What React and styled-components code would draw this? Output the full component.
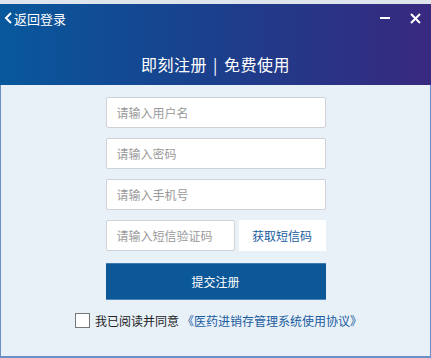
import styled, { createGlobalStyle } from "styled-components";

const GlobalStyle = createGlobalStyle`
  html, body {
    margin: 0;
    padding: 0;
    background: #dfe5ec;
  }
  body {
    font-family: "Noto Sans CJK SC", "Liberation Sans", sans-serif;
  }
`;

const Window = styled.div`
  width: 431px;
  height: 358px;
  padding-top: 4px;
  box-sizing: border-box;
  display: flex;
  flex-direction: column;
  background: #dfe5ec;
`;

const Header = styled.div`
  height: 81px;
  background: linear-gradient(90deg, #08589c 0%, #1b3f8c 50%, #38297f 100%);
  color: #fff;
  display: flex;
  flex-direction: column;
`;

const TopBar = styled.div`
  height: 28px;
  display: flex;
  align-items: center;
  justify-content: space-between;
  padding: 0 10px 0 4px;
`;

const BackLink = styled.div`
  display: flex;
  align-items: center;
  gap: 1px;
  font-size: 13px;
  cursor: pointer;
`;

const WinButtons = styled.div`
  display: flex;
  align-items: center;
  gap: 19px;
`;

const Title = styled.div`
  flex: 1;
  display: flex;
  align-items: center;
  justify-content: center;
  font-size: 16px;
  padding-top: 11px;
  letter-spacing: 0.5px;
  word-spacing: 2px;
`;

const Body = styled.div`
  flex: 1;
  background: #e8f0f8;
  border-left: 1px solid #6b8fc4;
  border-right: 1px solid #6b8fc4;
  border-bottom: 2px solid #6b8fc4;
  display: flex;
  flex-direction: column;
  align-items: center;
  padding-top: 12px;
`;

const Form = styled.div`
  width: 220px;
  display: flex;
  flex-direction: column;
  gap: 10px;
`;

const Input = styled.input`
  box-sizing: border-box;
  width: ${({ w }) => (w ? `${w}px` : "100%")};
  height: 31px;
  border: 1px solid #cfd3d8;
  border-radius: 2px;
  background: #fff;
  padding: 0 10px;
  font-family: inherit;
  font-size: 12px;
  color: #333;
  outline: none;
  &::placeholder {
    color: #9a9a9a;
  }
`;

const CodeRow = styled.div`
  display: flex;
  gap: 4px;
`;

const CodeButton = styled.button`
  flex: 1;
  height: 31px;
  border: none;
  background: #fff;
  color: #1a5c9e;
  font-family: inherit;
  font-size: 12px;
  padding: 0;
`;

const Submit = styled.button`
  margin-top: 2px;
  height: 37px;
  border: none;
  border-top: 1px solid #3f7bb5;
  border-bottom: 1px solid #4b86bf;
  background: #0c5798;
  color: #fff;
  font-family: inherit;
  font-size: 12px;
`;

const Agree = styled.label`
  margin-top: 12px;
  margin-left: 6px;
  display: flex;
  align-items: center;
  gap: 5px;
  font-size: 12px;
  color: #222;
`;

const Box = styled.span`
  width: 13px;
  height: 13px;
  border: 1px solid #777;
  background: #fff;
  display: inline-block;
`;

const Protocol = styled.span`
  color: #1a5c9e;
  margin-left: -2px;
`;

export default function App() {
  return (
    <>
      <GlobalStyle />
      <Window>
        <Header>
          <TopBar>
            <BackLink>
              <svg width="9" height="12" viewBox="0 0 9 12">
                <path d="M7 1 L2 6 L7 11" stroke="#fff" strokeWidth="2" fill="none" />
              </svg>
              返回登录
            </BackLink>
            <WinButtons>
              <svg width="11" height="4" viewBox="0 0 11 4">
                <rect x="0" y="1" width="10" height="2" fill="#fff" />
              </svg>
              <svg width="11" height="11" viewBox="0 0 11 11">
                <path d="M1 1 L10 10 M10 1 L1 10" stroke="#fff" strokeWidth="2" />
              </svg>
            </WinButtons>
          </TopBar>
          <Title>即刻注册 | 免费使用</Title>
        </Header>
        <Body>
          <Form>
            <Input placeholder="请输入用户名" />
            <Input placeholder="请输入密码" type="password" />
            <Input placeholder="请输入手机号" />
            <CodeRow>
              <Input w={129} placeholder="请输入短信验证码" />
              <CodeButton>获取短信码</CodeButton>
            </CodeRow>
            <Submit>提交注册</Submit>
          </Form>
          <Agree>
            <Box />
            我已阅读并同意
            <Protocol>《医药进销存管理系统使用协议》</Protocol>
          </Agree>
        </Body>
      </Window>
    </>
  );
}
